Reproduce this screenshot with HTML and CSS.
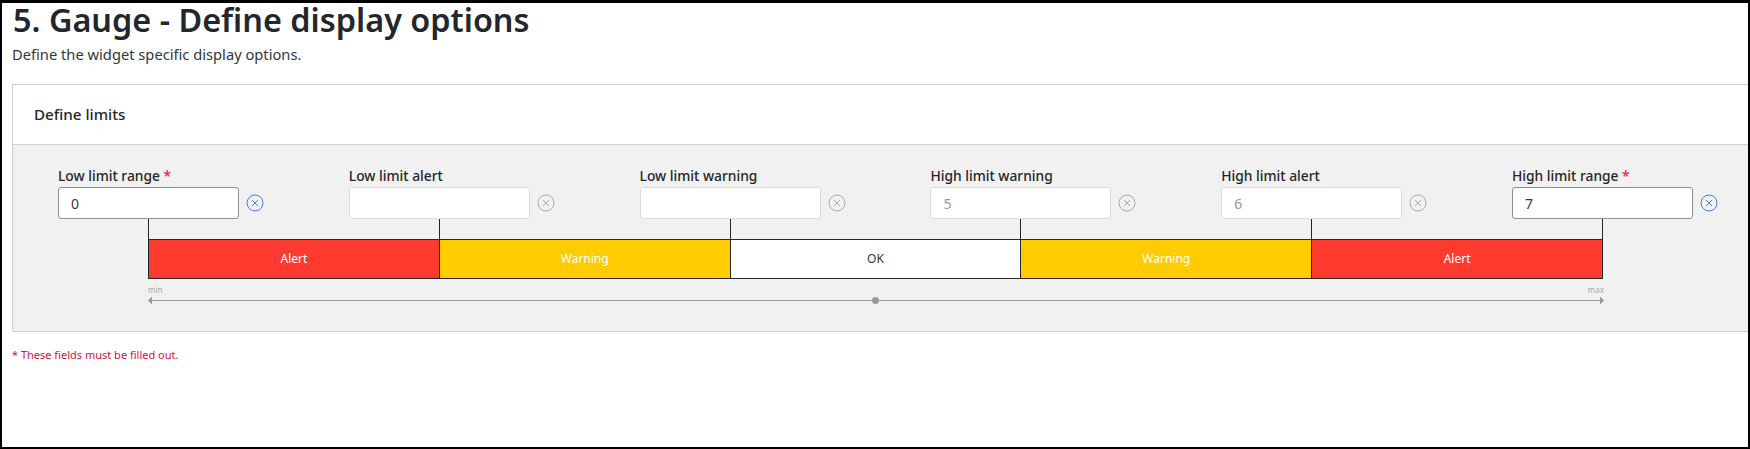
FILE: index.html
```html
<!DOCTYPE html>
<html>
   <head>
      <meta name="viewport" content="width=device-width, initial-scale=1.0"/>
      <title>Gauge - Define display options</title>
      <link rel="stylesheet" href="styles.css">
   </head>
   <body>
      <div class="page">
         <h1>5. Gauge - Define display options</h1>
         <p class="intro">Define the widget specific display options.</p>
         <div class="card">
            <div class="card-head">Define limits</div>
            <div class="card-body">
               <!--six limit inputs-->
               <div class="fields">
                  <div class="field">
                     <label>Low limit range <span class="req">*</span></label>
                     <div class="input-row">
                        <input class="strong" type="text" value="0">
                        <svg class="clear on" viewBox="0 0 18 18"><circle cx="9" cy="9" r="8"/><path d="M6 6l6 6M12 6l-6 6"/></svg>
                     </div>
                  </div>
                  <div class="field">
                     <label>Low limit alert</label>
                     <div class="input-row">
                        <input type="text" value="">
                        <svg class="clear" viewBox="0 0 18 18"><circle cx="9" cy="9" r="8"/><path d="M6 6l6 6M12 6l-6 6"/></svg>
                     </div>
                  </div>
                  <div class="field">
                     <label>Low limit warning</label>
                     <div class="input-row">
                        <input type="text" value="">
                        <svg class="clear" viewBox="0 0 18 18"><circle cx="9" cy="9" r="8"/><path d="M6 6l6 6M12 6l-6 6"/></svg>
                     </div>
                  </div>
                  <div class="field">
                     <label>High limit warning</label>
                     <div class="input-row">
                        <input type="text" value="5">
                        <svg class="clear" viewBox="0 0 18 18"><circle cx="9" cy="9" r="8"/><path d="M6 6l6 6M12 6l-6 6"/></svg>
                     </div>
                  </div>
                  <div class="field">
                     <label>High limit alert</label>
                     <div class="input-row">
                        <input type="text" value="6">
                        <svg class="clear" viewBox="0 0 18 18"><circle cx="9" cy="9" r="8"/><path d="M6 6l6 6M12 6l-6 6"/></svg>
                     </div>
                  </div>
                  <div class="field">
                     <label>High limit range <span class="req">*</span></label>
                     <div class="input-row">
                        <input class="strong" type="text" value="7">
                        <svg class="clear on" viewBox="0 0 18 18"><circle cx="9" cy="9" r="8"/><path d="M6 6l6 6M12 6l-6 6"/></svg>
                     </div>
                  </div>
               </div>
               <!--lines from the inputs down to the bar-->
               <div class="stems">
                  <div></div><div></div><div></div><div></div><div></div>
               </div>
               <div class="bar">
                  <div class="seg alert">Alert</div>
                  <div class="seg warning">Warning</div>
                  <div class="seg ok">OK</div>
                  <div class="seg warning">Warning</div>
                  <div class="seg alert">Alert</div>
               </div>
               <div class="scale">
                  <div class="scale-labels"><span>min</span><span>max</span></div>
                  <svg class="axis" viewBox="0 0 1456 8">
                     <path class="axis-line" d="M3 4.500H1453"/>
                     <path class="axis-head" d="M0 4.500l4-4v8zM1456 4.500l-4-4v8z"/>
                     <circle class="axis-head" cx="727.500" cy="4.500" r="3.500"/>
                  </svg>
               </div>
            </div>
         </div>
         <p class="note">* These fields must be filled out.</p>
      </div>
   </body>
</html>
```

FILE: styles.css
```css
html, body {
margin: 0;
padding: 0;
background: white;
}
body {
font-family: "Noto Sans", "Open Sans", sans-serif;
color: #23262b;
}
.page {
box-sizing: border-box;
height: 449px;
width: 1750px;
border: 2px solid black;
border-top-width: 3px;
padding-left: 10px;
}
h1 {
margin: 0 0 0 1px;
font-size: 32.4px;
line-height: 32px;
font-weight: 600;
}
.intro {
margin: 9px 0 0 0;
font-size: 14.7px;
line-height: 20px;
color: #33373d;
}
.card {
margin-top: 20px;
border: 1px solid #cfcfcf;
border-right: none;
}
.card-head {
box-sizing: border-box;
height: 60px;
padding-left: 21px;
font-size: 15.2px;
font-weight: 500;
line-height: 58px;
border-bottom: 1px solid #cfcfcf;
background: white;
}
.card-body {
box-sizing: border-box;
height: 186px;
padding: 21px 0 0 45px;
background: #f1f1f1;
}
.fields {
display: grid;
grid-template-columns: repeat(6, 290.8px);
}
.field label {
display: block;
font-size: 13.8px;
font-weight: 500;
line-height: 20px;
height: 21px;
}
.req {
color: #f0244f;
}
.input-row {
display: flex;
align-items: center;
gap: 7px;
}
input {
box-sizing: border-box;
width: 181px;
height: 32px;
padding: 0 12px;
margin: 0;
border: 1px solid #dcdcdc;
border-radius: 3px;
background: white;
font-family: inherit;
font-size: 14px;
color: #999;
outline: none;
}
input.strong {
border-color: #8f8f8f;
color: #33373d;
}
.clear {
width: 18px;
height: 18px;
fill: none;
stroke: #aaa;
stroke-width: 1;
}
.clear.on {
stroke: #4b7fe8;
}
.stems {
display: flex;
margin-left: 90px;
height: 20px;
width: 1455px;
}
.stems div {
flex: 1;
border-left: 1px solid #23262b;
}
.stems div:last-child {
border-right: 1px solid #23262b;
}
.bar {
display: flex;
margin-left: 90px;
width: 1455px;
height: 40px;
box-sizing: border-box;
border: 1px solid #23262b;
}
.seg {
flex: 1;
text-align: center;
font-size: 12px;
line-height: 38px;
color: white;
border-left: 1px solid #23262b;
}
.seg:first-child {
border-left: none;
}
.alert {
background: #ff3b30;
}
.warning {
background: #ffcc00;
}
.ok {
background: white;
color: #33373d;
}
.scale {
margin: 5px 0 0 90px;
width: 1456px;
}
.scale-labels {
display: flex;
justify-content: space-between;
font-size: 8px;
line-height: 12px;
color: #a8a8a8;
}
.axis {
display: block;
width: 1456px;
height: 8px;
}
.axis-line {
stroke: #999;
stroke-width: 1;
fill: none;
}
.axis-head {
fill: #999;
}
.note {
margin: 16px 0 0 0;
font-size: 11px;
line-height: 14px;
color: #d9103f;
}
```
